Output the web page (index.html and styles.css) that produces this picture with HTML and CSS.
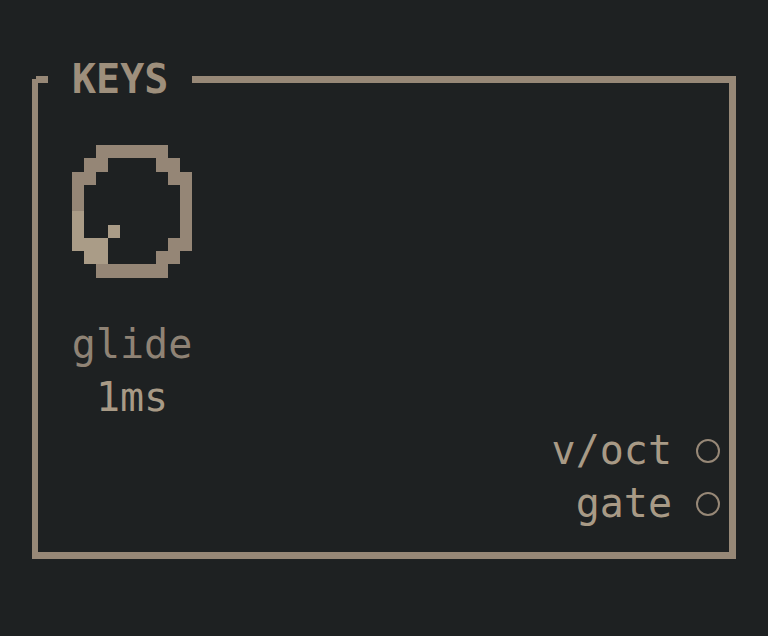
FILE: index.html
```html
<!DOCTYPE html>
<html>
<head>
<meta charset="utf-8">
<link rel="stylesheet" href="styles.css">
</head>
<body>
<section class="panel">
  <h1 class="title">KEYS</h1>
  <div class="knob-col">
    <svg class="knob" viewBox="0 0 10 10" preserveAspectRatio="none" shape-rendering="crispEdges">
      <g class="ring">
        <rect x="2" y="0" width="6" height="1"/>
        <rect x="1" y="1" width="2" height="1"/>
        <rect x="7" y="1" width="2" height="1"/>
        <rect x="0" y="2" width="2" height="1"/>
        <rect x="8" y="2" width="2" height="1"/>
        <rect x="0" y="3" width="1" height="2"/>
        <rect x="9" y="3" width="1" height="4"/>
        <rect x="8" y="7" width="2" height="1"/>
        <rect x="7" y="8" width="2" height="1"/>
        <rect x="2" y="9" width="6" height="1"/>
      </g>
      <g class="value">
        <rect x="0" y="5" width="1" height="2"/>
        <rect x="3" y="6" width="1" height="1"/>
        <rect x="0" y="7" width="3" height="1"/>
        <rect x="1" y="8" width="2" height="1"/>
      </g>
    </svg>
    <div class="knob-label">glide</div>
    <div class="knob-value">1ms</div>
  </div>
  <div class="ports">
    <div class="port"><span class="port-name">v/oct</span><span class="jack"></span></div>
    <div class="port"><span class="port-name">gate</span><span class="jack"></span></div>
  </div>
</section>
</body>
</html>
```

FILE: styles.css
```css
html, body {
  margin: 0;
  padding: 0;
}

body {
  width: 768px;
  height: 636px;
  background: #1e2122;
  font-family: "DejaVu Sans Mono", "Liberation Mono", monospace;
  font-size: 40px;
  line-height: 53px;
  color: #a89a86;
  overflow: hidden;
}

.panel {
  position: relative;
  box-sizing: border-box;
  margin: 76px 0 0 32px;
  width: 704px;
  height: 483px;
  border: 7px solid #978877;
  border-left-width: 6px;
  display: flex;
  flex-direction: column;
}

.panel::before {
  content: "";
  position: absolute;
  left: -6px;
  top: -7px;
  width: 4px;
  height: 3px;
  background: #1e2122;
}

.title {
  position: absolute;
  left: 10px;
  top: -30px;
  margin: 0;
  padding: 0 24px;
  font-size: 40px;
  line-height: 53px;
  font-weight: bold;
  color: #9e8f7c;
  background: #1e2122;
}

.knob-col {
  margin: 62px 0 0 34px;
  width: 120px;
  display: flex;
  flex-direction: column;
  align-items: center;
}

.knob {
  display: block;
  width: 120px;
  height: 132.5px;
  margin-bottom: 40.5px;
}

.ring {
  fill: #958676;
}

.value {
  fill: #aa9c87;
}

.knob-label {
  color: #8f8375;
}

.knob-value {
  color: #a89a86;
}

.ports {
  display: flex;
  flex-direction: column;
  align-items: flex-end;
  padding-right: 9px;
}

.port {
  display: flex;
  align-items: center;
  gap: 24px;
  height: 53px;
}

.port-name {
  color: #a89a86;
}

.jack {
  box-sizing: border-box;
  width: 24px;
  height: 24px;
  border: 2px solid #978877;
  border-radius: 50%;
}
```
